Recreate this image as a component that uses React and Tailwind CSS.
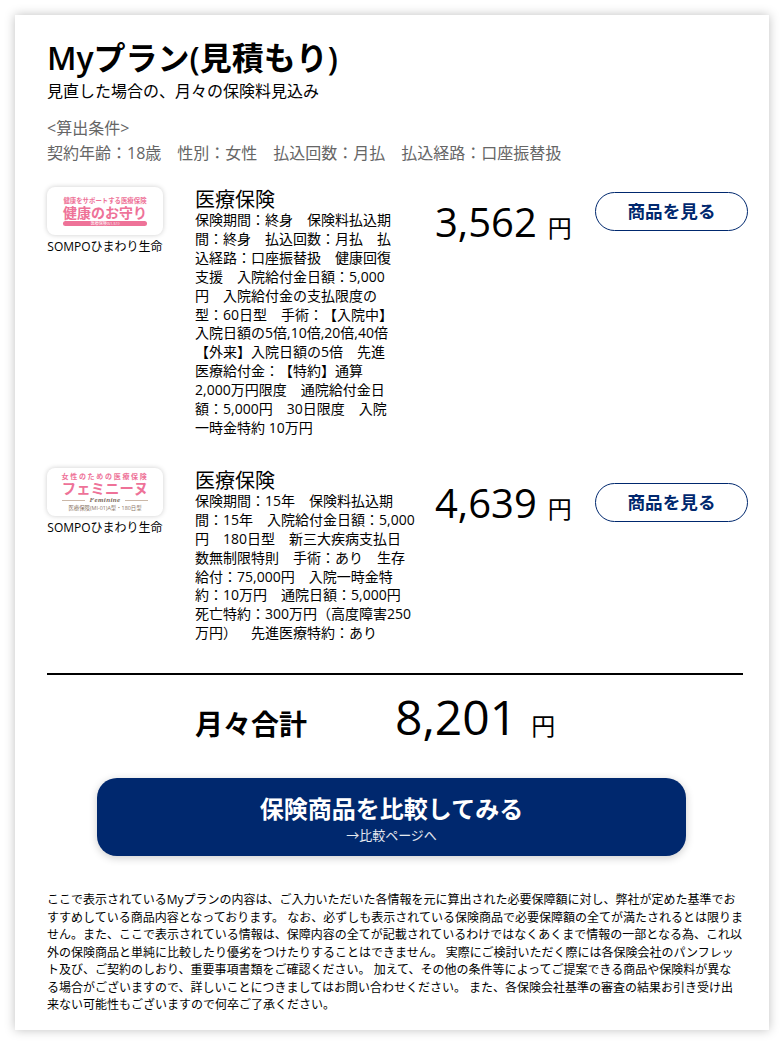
const FONT = "font-['Open_Sans','Noto_Sans_CJK_JP',sans-serif]";

// source text is typed with ascii ":" "(" ")" and "_" for the full-width space
const wide = (s) =>
  s
    .replace(/:/g, "\uFF1A")
    .replace(/_/g, "\u3000")
    .replace(/\(/g, "\uFF08")
    .replace(/\)/g, "\uFF09");

const plans = [
  {
    lines: [
      "保険期間:終身_保険料払込期",
      "間:終身_払込回数:月払_払",
      "込経路:口座振替扱_健康回復",
      "支援_入院給付金日額:5,000",
      "円_入院給付金の支払限度の",
      "型:60日型_手術:【入院中】",
      "入院日額の5倍,10倍,20倍,40倍",
      "【外来】入院日額の5倍_先進",
      "医療給付金:【特約】通算",
      "2,000万円限度_通院給付金日",
      "額:5,000円_30日限度_入院",
      "一時金特約 10万円",
    ],
    price: "3,562",
    logo: "omamori",
    buttonClass: "mt-[5px]",
  },
  {
    lines: [
      "保険期間:15年_保険料払込期",
      "間:15年_入院給付金日額:5,000",
      "円_180日型_新三大疾病支払日",
      "数無制限特則_手術:あり_生存",
      "給付:75,000円_入院一時金特",
      "約:10万円_通院日額:5,000円",
      "死亡特約:300万円(高度障害250",
      "万円)_先進医療特約:あり",
    ],
    price: "4,639",
    logo: "feminine",
    buttonClass: "mt-[15px]",
  },
];

const notes = [
  "ここで表示されているMyプランの内容は、ご入力いただいた各情報を元に算出された必要保障額に対し、弊社が定めた基準でお",
  "すすめしている商品内容となっております。 なお、必ずしも表示されている保険商品で必要保障額の全てが満たされるとは限りま",
  "せん。また、ここで表示されている情報は、保障内容の全てが記載されているわけではなくあくまで情報の一部となる為、これ以",
  "外の保険商品と単純に比較したり優劣をつけたりすることはできません。 実際にご検討いただく際には各保険会社のパンフレッ",
  "ト及び、ご契約のしおり、重要事項書類をご確認ください。 加えて、その他の条件等によってご提案できる商品や保険料が異な",
  "る場合がございますので、詳しいことにつきましてはお問い合わせください。 また、各保険会社基準の審査の結果お引き受け出",
  "来ない可能性もございますので何卒ご了承ください。",
];

function OmamoriLogo() {
  return (
    <div className="flex h-[48px] w-[116px] flex-col items-center justify-center rounded-lg bg-white text-[#ee7298] shadow-[0_0_5px_rgba(0,0,0,0.2)]">
      <div className="text-[6.4px] leading-[8px] font-bold whitespace-nowrap">健康をサポートする医療保険</div>
      <div className="text-[14px] leading-[15px] font-bold whitespace-nowrap">健康のお守り</div>
      <div className="mt-[1px] flex h-[5px] w-[84px] items-center justify-center rounded-sm bg-[#ee7298] text-[4px] leading-[5px] text-white">医療保険(S1-51)</div>
    </div>
  );
}

function FeminineLogo() {
  return (
    <div className="flex h-[48px] w-[116px] flex-col items-center justify-center rounded-lg bg-white text-[#ee7298] shadow-[0_0_5px_rgba(0,0,0,0.2)]">
      <div className="text-[7px] leading-[8px] font-bold tracking-[1.7px] whitespace-nowrap">女性のための医療保険</div>
      <div className="text-[14.4px] leading-[16px] font-bold whitespace-nowrap">フェミニーヌ</div>
      <div className="flex w-[86px] items-center gap-1">
        <div className="h-px flex-1 bg-[#cbb8a8]" />
        <div className="font-['Liberation_Serif',serif] text-[7px] leading-[7px] font-bold tracking-[0.4px] text-[#7d6a5c] italic">Feminine</div>
        <div className="h-px flex-1 bg-[#cbb8a8]" />
      </div>
      <div className="mt-[1px] text-[5.4px] leading-[6px] whitespace-nowrap text-[#8a7466]">医療保険(MI-01)A型・180日型</div>
    </div>
  );
}

function PlanRow({ plan }) {
  return (
    <div className="flex items-start">
      <div className="w-[116px] shrink-0">
        {plan.logo === "omamori" ? <OmamoriLogo /> : <FeminineLogo />}
        <div className="mt-[4px] text-center text-[12px] leading-[16px] whitespace-nowrap text-black">SOMPOひまわり生命</div>
      </div>
      <div className="ml-[32px] w-[220px] shrink-0">
        <div className="pt-[1px] text-[20px] leading-[23px] text-black">医療保険</div>
        <div className="text-[14px] leading-[18.9px] whitespace-nowrap text-black">
          {plan.lines.map((line) => (
            <div key={line}>{wide(line)}</div>
          ))}
        </div>
      </div>
      <div className="ml-[20px] flex w-[160px] shrink-0 items-baseline pt-[5px] leading-[60px]">
        <span className="text-[40px] text-black">{plan.price}</span>
        <span className="ml-[11px] text-[24px] text-black">円</span>
      </div>
      <button className={`${plan.buttonClass} flex h-[39px] w-[153px] shrink-0 items-center justify-center rounded-full border border-[#00286e] bg-white text-[17.6px] font-bold text-[#00286e]`}>
        商品を見る
      </button>
    </div>
  );
}

export default function App() {
  return (
    <div className={`${FONT} bg-white p-[15px] [text-spacing-trim:space-all]`}>
      <div className="h-[1015px] bg-white pt-[23px] pr-[26px] pl-[32px] shadow-[0_0_10px_rgba(0,0,0,0.25)]">
        <h1 className="mb-[2px] text-[32px] leading-[40px] font-semibold text-black">Myプラン(見積もり)</h1>
        <p className="text-[16px] leading-[22px] text-black">見直した場合の、月々の保険料見込み</p>

        <div className="mt-[14px] text-[16px] leading-[25px] text-[#666666]">
          <div>{"<算出条件>"}</div>
          <div>{wide("契約年齢:18歳_性別:女性_払込回数:月払_払込経路:口座振替扱")}</div>
        </div>

        <div className="mt-[21px] flex flex-col gap-[30px]">
          {plans.map((plan) => (
            <PlanRow key={plan.price} plan={plan} />
          ))}
        </div>

        <hr className="mt-[30px] h-[2px] border-0 bg-black" />

        <div className="mt-[4px] flex items-baseline pl-[148px] leading-[76px]">
          <span className="w-[200px] text-[28px] font-bold text-black">月々合計</span>
          <span className="text-[48px] text-black">8,201</span>
          <span className="ml-[14px] text-[24px] text-black">円</span>
        </div>

        <button className="mt-[14px] ml-[50px] flex h-[78px] w-[589px] flex-col items-center rounded-[20px] bg-[#00286e] pt-[15px] text-white shadow-[0_2px_8px_rgba(0,0,0,0.2)]">
          <span className="text-[24px] leading-[32px] font-bold">保険商品を比較してみる</span>
          <span className="mt-[1px] text-[13px] leading-[18px] text-white/90">→比較ページへ</span>
        </button>

        <div className="mt-[35px] w-[696px] text-[12px] leading-[17.5px] whitespace-nowrap text-black">
          {notes.map((line) => (
            <div key={line}>{line}</div>
          ))}
        </div>
      </div>
    </div>
  );
}
